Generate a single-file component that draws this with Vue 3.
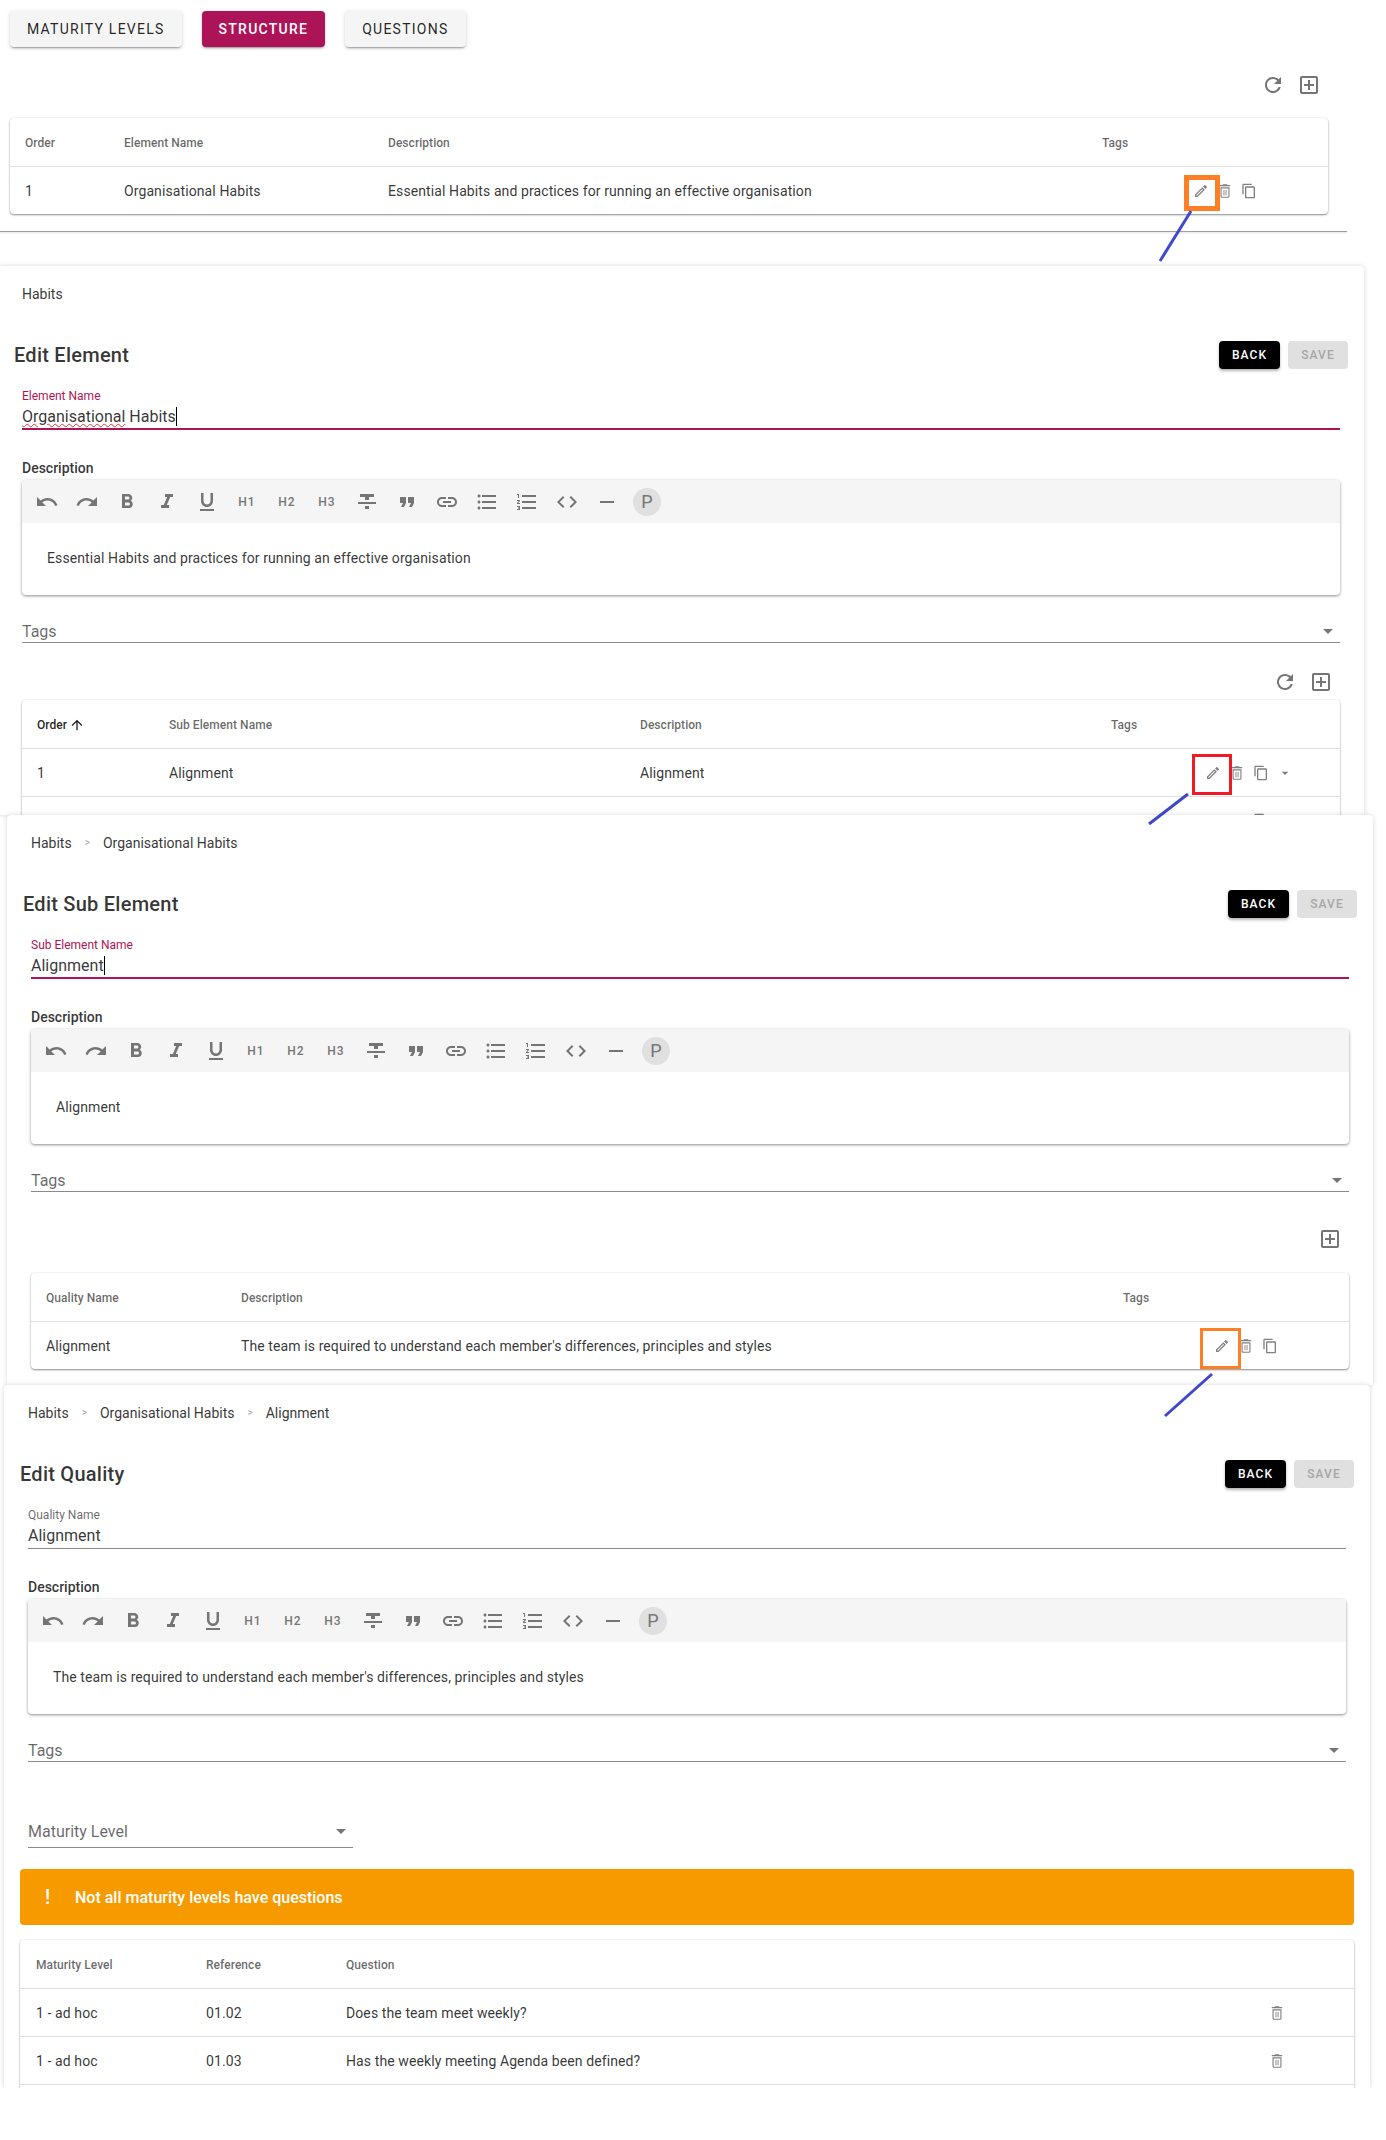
<template>
  <div class="page">
    <div class="tabs">
      <button v-for="tab in tabs" :key="tab" class="tab" :class="{ active: tab === 'Structure' }">{{ tab }}</button>
    </div>
    <div class="icon-bar top-bar">
      <svg v-for="name in ['refresh', 'add']" :key="name" class="ic24" viewBox="0 0 24 24"><path :d="icons[name]" /></svg>
    </div>
    <div class="table cols-top top-table">
      <div class="row head">
        <span v-for="h in topTable.head" :key="h">{{ h }}</span>
      </div>
      <div v-for="(r, i) in topTable.rows" :key="i" class="row">
        <span v-for="(c, j) in r" :key="j">{{ c }}</span>
        <span class="actions">
          <svg v-for="a in ['edit', 'trash', 'copy']" :key="a" class="ic16" :class="a" viewBox="0 0 24 24"><path :d="icons[a]" /></svg>
        </span>
      </div>
    </div>
    <div class="rule"></div>

    <section v-for="p in panels" :key="p.id" class="panel" :class="'panel-' + p.id">
      <div class="crumbs">
        <template v-for="(c, i) in p.crumbs" :key="c">
          <span v-if="i" class="sep">&gt;</span>
          <span>{{ c }}</span>
        </template>
      </div>
      <div class="head-row">
        <h2>{{ p.title }}</h2>
        <div class="head-btns">
          <button class="btn-back">Back</button>
          <button class="btn-save">Save</button>
        </div>
      </div>

      <div class="field" :class="{ focused: p.focused }">
        <label>{{ p.label }}</label>
        <div class="value"><span v-if="p.spell" class="spell">{{ p.spell }}</span>{{ p.value }}<span v-if="p.focused" class="cursor"></span></div>
      </div>

      <div class="desc-label">Description</div>
      <div class="editor">
        <div class="toolbar">
          <span v-for="t in toolbar" :key="t" class="tool" :class="{ bubble: t === 'P' }">
            <svg v-if="icons[t]" class="ic24" viewBox="0 0 24 24"><path :d="icons[t]" /></svg>
            <template v-else>{{ t }}</template>
          </span>
        </div>
        <div class="editor-body">{{ p.desc }}</div>
      </div>

      <div class="select tags">
        <span>Tags</span>
        <svg class="ic24" viewBox="0 0 24 24"><path :d="icons.caret" /></svg>
      </div>

      <template v-if="p.id === 'element'">
        <div class="icon-bar element-bar">
          <svg v-for="name in ['refresh', 'add']" :key="name" class="ic24" viewBox="0 0 24 24"><path :d="icons[name]" /></svg>
        </div>
        <div class="table cols-sub inset">
          <div class="row head">
            <span class="sorted">Order <svg class="ic16" viewBox="0 0 24 24"><path :d="icons.up" /></svg></span>
            <span>Sub Element Name</span><span>Description</span><span>Tags</span>
          </div>
          <div class="row">
            <span>1</span><span>Alignment</span><span>Alignment</span><span></span>
            <span class="actions">
              <svg v-for="a in ['edit', 'trash', 'copy']" :key="a" class="ic16" :class="a" viewBox="0 0 24 24"><path :d="icons[a]" /></svg>
              <svg class="ic16" viewBox="0 0 24 24"><path :d="icons.caret" /></svg>
            </span>
          </div>
          <div class="row">
            <span></span><span></span><span></span><span></span>
            <span class="actions peek">
              <svg v-for="a in ['edit', 'trash', 'copy']" :key="a" class="ic16" :class="a" viewBox="0 0 24 24"><path :d="icons[a]" /></svg>
            </span>
          </div>
        </div>
      </template>

      <template v-if="p.id === 'sub'">
        <div class="icon-bar sub-bar">
          <svg class="ic24" viewBox="0 0 24 24"><path :d="icons.add" /></svg>
        </div>
        <div class="table cols-quality inset sub-table">
          <div class="row head">
            <span>Quality Name</span><span>Description</span><span>Tags</span>
          </div>
          <div class="row">
            <span>Alignment</span>
            <span>The team is required to understand each member's differences, principles and styles</span>
            <span></span>
            <span class="actions">
              <svg v-for="a in ['edit', 'trash', 'copy']" :key="a" class="ic16" :class="a" viewBox="0 0 24 24"><path :d="icons[a]" /></svg>
            </span>
          </div>
        </div>
      </template>

      <template v-if="p.id === 'quality'">
        <div class="select maturity">
          <span>Maturity Level</span>
          <svg class="ic24" viewBox="0 0 24 24"><path :d="icons.caret" /></svg>
        </div>
        <div class="alert"><b>!</b>Not all maturity levels have questions</div>
        <div class="table cols-question question-table">
          <div class="row head">
            <span>Maturity Level</span><span>Reference</span><span>Question</span>
          </div>
          <div v-for="q in questions" :key="q.ref" class="row">
            <span>{{ q.level }}</span><span>{{ q.ref }}</span><span>{{ q.text }}</span>
            <span class="actions">
              <svg class="ic16 trash" viewBox="0 0 24 24"><path :d="icons.trash" /></svg>
            </span>
          </div>
          <div class="row"></div>
        </div>
      </template>
    </section>

    <!-- annotations drawn over the screenshots -->
    <svg class="marks" width="1386" height="2140" viewBox="0 0 1386 2140">
      <rect x="1186.5" y="177.5" width="31" height="31" fill="none" stroke="#ff7f27" stroke-width="5" />
      <line x1="1191" y1="211" x2="1160" y2="261" stroke="#3f48cc" stroke-width="3" />
      <rect x="1193.5" y="755.5" width="37" height="38" fill="none" stroke="#ed1c24" stroke-width="3" />
      <line x1="1188" y1="794" x2="1149" y2="824" stroke="#3f48cc" stroke-width="3" />
      <rect x="1201.5" y="1329.5" width="38" height="38" fill="none" stroke="#ff7f27" stroke-width="3" />
      <line x1="1212" y1="1374" x2="1165" y2="1416" stroke="#3f48cc" stroke-width="3" />
    </svg>
  </div>
</template>

<script setup>
const tabs = ["Maturity Levels", "Structure", "Questions"];

const icons = {
  refresh:
    "M17.65 6.35C16.2 4.9 14.21 4 12 4c-4.42 0-7.99 3.58-7.99 8s3.57 8 7.99 8c3.73 0 6.84-2.55 7.73-6h-2.08c-.82 2.33-3.04 4-5.65 4-3.31 0-6-2.69-6-6s2.69-6 6-6c1.66 0 3.14.69 4.22 1.78L13 11h7V4l-2.35 2.35z",
  add: "M19 3H5c-1.1 0-2 .9-2 2v14c0 1.1.9 2 2 2h14c1.1 0 2-.9 2-2V5c0-1.1-.9-2-2-2zm0 16H5V5h14v14zM11 17h2v-4h4v-2h-4V7h-2v4H7v2h4z",
  edit: "M14.06 9.02l.92.92L5.92 19H5v-.92l9.06-9.06M17.66 3c-.25 0-.51.1-.7.29l-1.83 1.83 3.75 3.75 1.83-1.83c.39-.39.39-1.02 0-1.41l-2.34-2.34c-.2-.2-.45-.29-.71-.29zm-3.6 3.19L3 17.25V21h3.75L17.81 9.94l-3.75-3.75z",
  trash:
    "M6 19c0 1.1.9 2 2 2h8c1.1 0 2-.9 2-2V7H6v12zM7.5 8.5h9V19c0 .3-.2.5-.5.5H8c-.3 0-.5-.2-.5-.5V8.5zm8-4.5l-1-1h-5l-1 1H5v1.5h14V4zM10 10.5h1.2v7H10zM12.8 10.5H14v7h-1.2z",
  copy: "M16 1H4c-1.1 0-2 .9-2 2v14h2V3h12V1zm3 4H8c-1.1 0-2 .9-2 2v14c0 1.1.9 2 2 2h11c1.1 0 2-.9 2-2V7c0-1.1-.9-2-2-2zm0 16H8V7h11v14z",
  caret: "M7 10l5 5 5-5z",
  up: "M4 12l1.41 1.41L11 7.83V20h2V7.83l5.58 5.59L20 12l-8-8-8 8z",
  undo: "M12.5 8c-2.65 0-5.05.99-6.9 2.6L2 7v9h9l-3.62-3.62c1.39-1.16 3.16-1.88 5.12-1.88 3.54 0 6.55 2.31 7.6 5.5l2.37-.78C21.08 11.03 17.15 8 12.5 8z",
  redo: "M18.4 10.6C16.55 8.99 14.15 8 11.5 8c-4.65 0-8.58 3.03-9.96 7.22L3.9 16c1.05-3.19 4.05-5.5 7.6-5.5 1.95 0 3.73.72 5.12 1.88L13 16h9V7l-3.6 3.6z",
  bold: "M15.6 10.79c.97-.67 1.65-1.77 1.65-2.79 0-2.26-1.75-4-4-4H7v14h7.04c2.09 0 3.71-1.7 3.71-3.79 0-1.52-.86-2.82-2.15-3.42zM10 6.5h3c.83 0 1.5.67 1.5 1.5s-.67 1.5-1.5 1.5h-3v-3zm3.5 9H10v-3h3.5c.83 0 1.5.67 1.5 1.5s-.67 1.5-1.5 1.5z",
  italic: "M10 4v3h2.21l-3.42 8H6v3h8v-3h-2.21l3.42-8H18V4z",
  underline:
    "M12 17c3.31 0 6-2.69 6-6V3h-2.5v8c0 1.93-1.57 3.5-3.5 3.5S8.5 12.93 8.5 11V3H6v8c0 3.31 2.69 6 6 6zm-7 2v2h14v-2H5z",
  strike: "M10 19h4v-3h-4v3zM5 4v3h5v3h4V7h5V4H5zM3 14h18v-2H3v2z",
  quote: "M6 17h3l2-4V7H5v6h3zm8 0h3l2-4V7h-6v6h3z",
  link: "M3.9 12c0-1.71 1.39-3.1 3.1-3.1h4V7H7c-2.76 0-5 2.24-5 5s2.24 5 5 5h4v-1.9H7c-1.71 0-3.1-1.39-3.1-3.1zM8 13h8v-2H8v2zm9-6h-4v1.9h4c1.71 0 3.1 1.39 3.1 3.1s-1.39 3.1-3.1 3.1h-4V17h4c2.76 0 5-2.24 5-5s-2.24-5-5-5z",
  bullets:
    "M4 10.5c-.83 0-1.5.67-1.5 1.5s.67 1.5 1.5 1.5 1.5-.67 1.5-1.5-.67-1.5-1.5-1.5zm0-6c-.83 0-1.5.67-1.5 1.5S3.17 7.5 4 7.5 5.5 6.83 5.5 6 4.83 4.5 4 4.5zm0 12c-.83 0-1.5.68-1.5 1.5s.68 1.5 1.5 1.5 1.5-.68 1.5-1.5-.67-1.5-1.5-1.5zM7 19h14v-2H7v2zm0-6h14v-2H7v2zm0-8v2h14V5H7z",
  numbers:
    "M2 17h2v.5H3v1h1v.5H2v1h3v-4H2v1zm1-9h1V4H2v1h1v3zm-1 3h1.8L2 13.1v.9h3v-1H3.2L5 10.9V10H2v1zm5-6v2h14V5H7zm0 14h14v-2H7v2zm0-6h14v-2H7v2z",
  code: "M9.4 16.6L4.8 12l4.6-4.6L8 6l-6 6 6 6 1.4-1.4zm5.2 0l4.6-4.6-4.6-4.6L16 6l6 6-6 6-1.4-1.4z",
  rule: "M19 13H5v-2h14v2z",
};

const toolbar = [
  "undo", "redo", "bold", "italic", "underline", "H1", "H2", "H3",
  "strike", "quote", "link", "bullets", "numbers", "code", "rule", "P",
];

const topTable = {
  head: ["Order", "Element Name", "Description", "Tags"],
  rows: [["1", "Organisational Habits", "Essential Habits and practices for running an effective organisation", ""]],
};

const panels = [
  {
    id: "element",
    crumbs: ["Habits"],
    title: "Edit Element",
    label: "Element Name",
    spell: "Organisational",
    value: " Habits",
    focused: true,
    desc: "Essential Habits and practices for running an effective organisation",
  },
  {
    id: "sub",
    crumbs: ["Habits", "Organisational Habits"],
    title: "Edit Sub Element",
    label: "Sub Element Name",
    value: "Alignment",
    focused: true,
    desc: "Alignment",
  },
  {
    id: "quality",
    crumbs: ["Habits", "Organisational Habits", "Alignment"],
    title: "Edit Quality",
    label: "Quality Name",
    value: "Alignment",
    focused: false,
    desc: "The team is required to understand each member's differences, principles and styles",
  },
];

const questions = [
  { level: "1 - ad hoc", ref: "01.02", text: "Does the team meet weekly?" },
  { level: "1 - ad hoc", ref: "01.03", text: "Has the weekly meeting Agenda been defined?" },
];
</script>

<style scoped>
.page {
  position: relative;
  width: 1386px;
  height: 2140px;
  overflow: hidden;
  background: #fff;
  font-family: Roboto, "Liberation Sans", sans-serif;
  font-size: 14px;
  color: rgba(0, 0, 0, 0.8);
}

svg {
  display: block;
  flex: none;
  fill: #757575;
}
.ic24 { width: 24px; height: 24px; }
.ic16 { width: 16px; height: 16px; fill: #808080; }
.ic16.trash {
  width: 18px;
  height: 18px;
  margin: 0 -1px;
}
.sorted .ic16 { fill: rgba(0, 0, 0, 0.87); }
.peek .edit,
.peek .trash {
  visibility: hidden;
}

.tabs {
  display: flex;
  gap: 20px;
  padding: 11px 0 0 10px;
}
.tab {
  height: 36px;
  padding: 0 17px;
  border: none;
  border-radius: 4px;
  background: #f5f5f5;
  color: rgba(0, 0, 0, 0.87);
  font: 400 14px Roboto, sans-serif;
  letter-spacing: 1.25px;
  text-transform: uppercase;
  box-shadow: 0 2px 2px -1px rgba(0, 0, 0, 0.35), 0 1px 4px rgba(0, 0, 0, 0.15);
}
.tab.active {
  background: #ad1457;
  color: #fff;
  font-weight: 500;
}

.icon-bar {
  display: flex;
  justify-content: flex-end;
  gap: 12px;
}
.top-bar {
  margin-top: 26px;
  width: 1321px;
}
.element-bar {
  margin: 27px 24px 0;
  padding-right: 7px;
}
.sub-bar {
  margin: 35px 24px 0;
  padding-right: 7px;
}

.table {
  background: #fff;
  border-radius: 4px;
  box-shadow: 0 1px 2px rgba(0, 0, 0, 0.45), 0 0 2px rgba(0, 0, 0, 0.08);
  overflow: hidden;
}
.top-table {
  width: 1318px;
  margin: 21px 0 0 10px;
}
.inset {
  margin: 6px 24px 0;
}
.sub-table {
  margin-top: 22px;
}
.question-table {
  margin: 15px 16px 0;
}

.row {
  display: grid;
  height: 48px;
  align-items: center;
  padding-left: 15px;
  border-top: 1px solid #e0e0e0;
  box-sizing: border-box;
  letter-spacing: 0.1px;
}
.row.head {
  padding-top: 1px;
  border-top: none;
  font-size: 12px;
  font-weight: 500;
  color: rgba(0, 0, 0, 0.6);
  letter-spacing: 0.05px;
}
.cols-top .row { grid-template-columns: 99px 264px 714px 91px 1fr; }
.cols-sub .row { grid-template-columns: 132px 471px 471px 94px 1fr; }
.cols-quality .row { grid-template-columns: 195px 882px 91px 1fr; }
.cols-question .row { grid-template-columns: 170px 140px 923px 1fr; padding-left: 16px; }

.sorted {
  display: flex;
  align-items: center;
  gap: 2px;
  color: rgba(0, 0, 0, 0.87);
}
.actions {
  display: flex;
  align-items: center;
  gap: 8px;
}

.rule {
  height: 1px;
  width: 1347px;
  margin-top: 17px;
  background: #9e9e9e;
  box-shadow: 0 1px 2px rgba(0, 0, 0, 0.15);
}

.panel {
  position: relative;
  width: 1366px;
  box-sizing: border-box;
  background: #fff;
  border-radius: 4px 4px 0 0;
  box-shadow: 0 0 5px rgba(0, 0, 0, 0.16);
  overflow: hidden;
}
.panel-element {
  height: 549px;
  margin: 34px 0 0 -2px;
}
.panel-sub {
  height: 570px;
  margin-left: 7px;
}
.panel-quality {
  height: 703px;
  margin-left: 4px;
  clip-path: inset(-6px -6px 0 -6px);
}

.crumbs {
  display: flex;
  align-items: center;
  gap: 13px;
  height: 20px;
  padding: 18px 24px 0;
  line-height: 20px;
}
.sep {
  font-size: 10px;
  color: #9e9e9e;
}

.head-row {
  display: flex;
  justify-content: space-between;
  align-items: center;
  height: 28px;
  margin-top: 37px;
  padding: 0 16px;
}
h2 {
  margin: 0;
  font-size: 20px;
  font-weight: 500;
  letter-spacing: 0.25px;
}
.head-btns {
  display: flex;
  gap: 8px;
}
.btn-back,
.btn-save {
  width: 61px;
  height: 28px;
  border: none;
  border-radius: 4px;
  font: 500 12px Roboto, sans-serif;
  letter-spacing: 1.07px;
  text-transform: uppercase;
}
.btn-back {
  background: #000;
  color: #fff;
  box-shadow: 0 2px 3px rgba(0, 0, 0, 0.3);
}
.btn-save {
  width: 60px;
  background: #e0e0e0;
  color: #a6a6a6;
}

.field {
  margin: 20px 24px 0;
  padding-bottom: 2px;
  border-bottom: 1px solid #8a8a8a;
}
.field.focused {
  padding-bottom: 1px;
  border-bottom: 2px solid #ad1457;
}
.field label {
  display: block;
  height: 18px;
  line-height: 14px;
  font-size: 12px;
  color: rgba(0, 0, 0, 0.6);
}
.field.focused label {
  color: #ad1457;
}
.value {
  height: 20px;
  line-height: 20px;
  font-size: 16px;
  white-space: pre;
}
.spell {
  text-decoration: underline wavy #e53935 1px;
  text-underline-offset: 1px;
}
.cursor {
  display: inline-block;
  width: 1px;
  height: 19px;
  margin-bottom: -4px;
  background: #000;
}

.desc-label {
  height: 20px;
  margin: 28px 24px 0;
  line-height: 20px;
  font-weight: 500;
}
.editor {
  margin: 2px 24px 0;
  border-radius: 4px;
  box-shadow: 0 1px 3px rgba(0, 0, 0, 0.45);
  overflow: hidden;
}
.toolbar {
  display: flex;
  align-items: center;
  gap: 12px;
  height: 43px;
  padding-left: 11px;
  background: #f5f5f5;
}
.tool {
  display: flex;
  justify-content: center;
  align-items: center;
  width: 28px;
  height: 28px;
  font-size: 12px;
  font-weight: 500;
  letter-spacing: 1px;
  color: #757575;
}
.tool.bubble {
  border-radius: 50%;
  background: #e0e0e0;
  font-size: 18px;
  font-weight: 400;
  letter-spacing: 0;
}
.editor-body {
  height: 72px;
  padding: 0 25px;
  line-height: 70px;
  letter-spacing: 0.1px;
}

.select {
  display: flex;
  justify-content: space-between;
  align-items: center;
  color: rgba(0, 0, 0, 0.6);
  font-size: 16px;
  border-bottom: 1px solid #8a8a8a;
}
.tags {
  height: 22px;
  margin: 25px 24px 0;
}
.maturity {
  width: 325px;
  height: 20px;
  margin: 59px 0 0 24px;
  padding-bottom: 6px;
}

.alert {
  display: flex;
  align-items: center;
  height: 56px;
  margin: 21px 16px 0;
  padding-left: 25px;
  border-radius: 4px;
  background: #f79a00;
  color: #fff;
  font-size: 16px;
  font-weight: 500;
}
.alert b {
  width: 30px;
  font-size: 20px;
  font-weight: 500;
}

.marks {
  position: absolute;
  top: 0;
  left: 0;
  fill: none;
  pointer-events: none;
}
</style>

<style>
html,
body {
  background: #fff;
}
</style>
